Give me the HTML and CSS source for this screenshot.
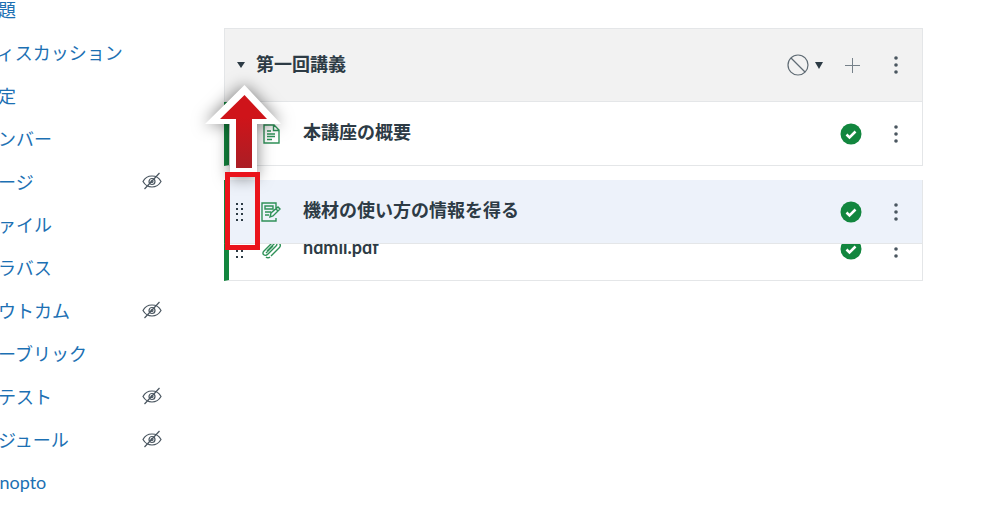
FILE: index.html
```html
<!DOCTYPE html>
<html lang="ja">
<head>
  <meta charset="UTF-8">
  <meta name="viewport" content="width=device-width, initial-scale=1">
  <title>モジュール</title>
  <link rel="stylesheet" href="styles.css">
</head>
<body>

<!-- Shared icons -->
<svg class="sprite" aria-hidden="true">
  <symbol id="hidden" viewBox="0 0 20 18">
    <path d="M1 9.500C3 5.500 6.500 4 10 4s7 1.500 9 5.500C17 13 13.500 15 10 15S3 13 1 9.500zM2.500 17 17.500 1"/>
    <circle cx="10" cy="9.500" r="3"/>
    <circle cx="10" cy="9.500" r="1"/>
  </symbol>
  <symbol id="grip" viewBox="0 0 10 20">
    <path d="M1 1h2v2H1zM6 1h2v2H6zM1 6h2v2H1zM6 6h2v2H6zM1 11h2v2H1zM6 11h2v2H6zM1 17h2v2H1zM6 17h2v2H6z"/>
  </symbol>
  <symbol id="check" viewBox="0 0 22 22">
    <circle cx="11" cy="11" r="10.500" fill="#12863e"/>
    <path d="M6.500 11.500l3 3 6-6" fill="none" stroke="#fff" stroke-width="2.500"/>
  </symbol>
  <symbol id="kebab" viewBox="0 0 4 18">
    <circle cx="2" cy="2" r="1.800"/><circle cx="2" cy="9" r="1.800"/><circle cx="2" cy="16" r="1.800"/>
  </symbol>
</svg>

<div class="page">
  <nav class="sidebar">
    <a href="#">課題</a>
    <a href="#">ディスカッション</a>
    <a href="#">評定</a>
    <a href="#">メンバー</a>
    <a href="#">ページ <svg class="eye"><use href="#hidden"/></svg></a>
    <a href="#">ファイル</a>
    <a href="#">シラバス</a>
    <a href="#">アウトカム <svg class="eye"><use href="#hidden"/></svg></a>
    <a href="#">ルーブリック</a>
    <a href="#">小テスト <svg class="eye"><use href="#hidden"/></svg></a>
    <a href="#">モジュール <svg class="eye"><use href="#hidden"/></svg></a>
    <a href="#">Panopto</a>
  </nav>

  <main class="module">
    <header class="module-header">
      <button class="toggle" aria-label="折りたたむ"><svg width="8" height="6"><path d="M0 0h8L4 6z"/></svg></button>
      <h2>第一回講義</h2>
      <button class="publish" aria-label="公開状態">
        <svg class="ban" width="22" height="22"><circle cx="11" cy="11" r="10"/><path d="M4 4l14 14"/></svg>
        <svg width="8" height="7"><path d="M0 0h8L4 7z"/></svg>
      </button>
      <button class="add" aria-label="追加"><svg width="15" height="15"><path d="M7.500 0v15M0 7.500h15"/></svg></button>
      <button class="more" aria-label="オプション"><svg width="4" height="18"><use href="#kebab"/></svg></button>
    </header>

    <div class="item">
      <button class="handle" aria-label="移動"><svg width="10" height="20"><use href="#grip"/></svg></button>
      <svg class="type" viewBox="0 0 20 20"><path d="M3 1h10l5 5v13H3zM12.500 1v5.500H18M6 7h4M6 10h8M6 12.500h8M6 15.500h5"/></svg>
      <a href="#">本講座の概要</a>
      <button class="state" aria-label="公開済み"><svg width="22" height="22"><use href="#check"/></svg></button>
      <button class="more" aria-label="オプション"><svg width="4" height="18"><use href="#kebab"/></svg></button>
    </div>

    <div class="item dragging">
      <button class="handle" aria-label="移動"><svg width="10" height="20"><use href="#grip"/></svg></button>
      <svg class="type" viewBox="0 0 20 20"><path d="M15 6V1H1v18h14v-3M4 4h8v3H4zM4 10h6M4 13h4M9 15l1-4 7-6 2 2-7 7zM15 7l2 2"/></svg>
      <a href="#">機材の使い方の情報を得る</a>
      <button class="state" aria-label="公開済み"><svg width="22" height="22"><use href="#check"/></svg></button>
      <button class="more" aria-label="オプション"><svg width="4" height="18"><use href="#kebab"/></svg></button>
      <!-- Drag direction marker -->
      <svg class="arrow" viewBox="0 0 78 98" aria-hidden="true">
        <defs>
          <linearGradient id="red" x1="0" y1="0" x2="0" y2="1">
            <stop offset="0.300" stop-color="#cf141a"/>
            <stop offset="1" stop-color="#ab1e25"/>
          </linearGradient>
        </defs>
        <path d="M39.500 0 76 39H52V92H25V39H0z" fill="#fff"/>
        <path d="M39.500 10 62 34H47V83H31V34H15z" fill="url(#red)"/>
      </svg>
      <div class="marker"></div>
    </div>

    <div class="item">
      <button class="handle" aria-label="移動"><svg width="10" height="20"><use href="#grip"/></svg></button>
      <svg class="type" viewBox="0 0 20 20"><path d="M6 12l7-7c2-2 4 0 2 2l-8 8c-3 3-7 0-4-3l8-8M10 17l8-8c3-3 0-7-3-4M5 14l7-7M9 18c-1 1-3 1-4 0"/></svg>
      <a href="#">hdmil.pdf</a>
      <button class="state" aria-label="公開済み"><svg width="22" height="22"><use href="#check"/></svg></button>
      <button class="more" aria-label="オプション"><svg width="4" height="18"><use href="#kebab"/></svg></button>
    </div>
  </main>
</div>

</body>
</html>
```
FILE: styles.css
```css
* { box-sizing: border-box; }
body { margin: 0; background: #fff; color: #2d3b45; font-family: Lato, "Noto Sans CJK JP", sans-serif; font-size: 18px; overflow: hidden; }
a { color: inherit; text-decoration: none; }
button { display: flex; align-items: center; justify-content: center; padding: 0; border: 0; background: none; color: inherit; cursor: pointer; }
svg { display: block; fill: #2d3b45; }
.sprite { position: absolute; width: 0; height: 0; }

.page { display: flex; align-items: flex-start; }

/* Course navigation, scrolled partly out of view */
.sidebar { flex: 0 0 182px; margin: -13px 42px 0 -20px; }
.sidebar a { display: flex; align-items: center; justify-content: space-between; height: 43px; color: #1c70b3; white-space: nowrap; }
.eye { width: 20px; height: 18px; fill: none; stroke: #4a5660; stroke-width: 1.2; }

/* Module */
.module { flex: 1; margin: 28px 77px 0 20px; }
.module-header { display: flex; align-items: center; height: 74px; padding-right: 16px; background: #f2f2f2; border: 1px solid #e4e6e8; }
.module-header h2 { flex: 1; margin: 0; padding-bottom: 2px; font-size: 18px; line-height: 24px; font-weight: bold; }
.toggle { width: 31px; }
.publish { gap: 6px; margin-right: 22px; }
.ban { fill: none; stroke: #5f6b74; stroke-width: 1.2; }
.add { margin-right: 26px; }
.add svg { stroke: #76818a; }
.more { width: 20px; }
.more svg { fill: #4a5660; }

.item { display: flex; align-items: center; height: 64px; padding-right: 16px; border: 1px solid #e4e6e8; border-top: 0; border-left: 5px solid #12863e; background: #fff; }
.item a { flex: 1; padding-bottom: 3px; font-weight: bold; line-height: 24px; }
.handle { width: 22px; }
.type { width: 20px; height: 20px; margin: 0 22px 0 10px; fill: none; stroke: #2f9158; stroke-width: 1.4; }
.state { margin-right: 24px; }

/* The dragged item lies over the next one */
.dragging { position: relative; z-index: 1; margin: 14px 0 -27px; background: #edf2fa; }
.arrow { position: absolute; left: -24px; top: -95px; width: 78px; height: 98px; overflow: visible; filter: drop-shadow(0 0 8px rgba(0, 0, 0, 0.5)); }
.marker { position: absolute; left: -4px; top: -8px; width: 35px; height: 78px; border: 5px solid #ea141b; }
```
